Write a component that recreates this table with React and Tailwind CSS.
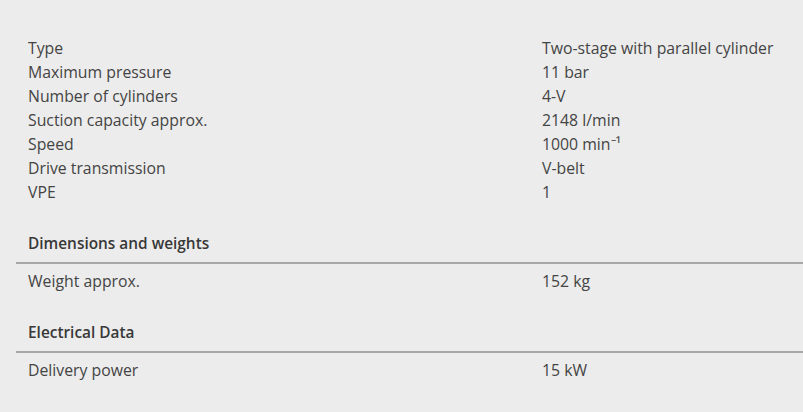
import React from "react";

const general = [
  ["Type", "Two-stage with parallel cylinder"],
  ["Maximum pressure", "11 bar"],
  ["Number of cylinders", "4-V"],
  ["Suction capacity approx.", "2148 l/min"],
  ["Speed", "1000 min⁻¹"],
  ["Drive transmission", "V-belt"],
  ["VPE", "1"],
];

const sections = [
  { title: "Dimensions and weights", rows: [["Weight approx.", "152 kg"]] },
  { title: "Electrical Data", rows: [["Delivery power", "15 kW"]] },
];

function Row({ label, value }) {
  return (
    <div className="flex h-6 items-center leading-6">
      <div className="w-[514px] shrink-0 pl-3">{label}</div>
      <div className="pl-3">{value}</div>
    </div>
  );
}

export default function App() {
  return (
    <div
      className="min-h-[412px] w-full overflow-hidden bg-[#ececec] pl-4 pt-9 text-[15.8px] text-[#444444]"
      style={{ fontFamily: "'Open Sans', 'Liberation Sans', sans-serif" }}
    >
      <div>
        {general.map(([l, v]) => (
          <Row key={l} label={l} value={v} />
        ))}
      </div>
      {sections.map((s) => (
        <div key={s.title} className="mt-7">
          <div className="border-b-2 border-[#a8a8a8] pb-1.5 pl-3 text-[15.4px] font-semibold leading-6 text-[#383838]">
            {s.title}
          </div>
          <div className="pt-[5px]">
            {s.rows.map(([l, v]) => (
              <Row key={l} label={l} value={v} />
            ))}
          </div>
        </div>
      ))}
    </div>
  );
}
